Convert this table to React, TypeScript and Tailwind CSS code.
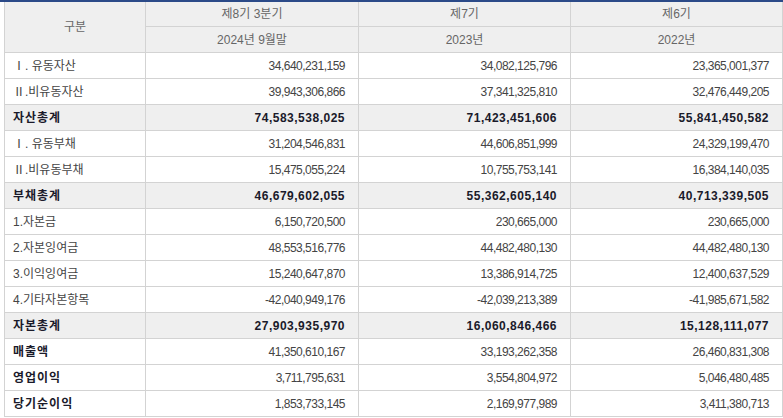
import React from 'react';

type Row = {
  label: string;
  values: [string, string, string];
  total?: boolean; // grey row, bold label + bold numbers
  strong?: boolean; // bold label only
};

const ROWS: Row[] = [
  { label: 'Ⅰ. 유동자산', values: ['34,640,231,159', '34,082,125,796', '23,365,001,377'] },
  { label: 'Ⅱ.비유동자산', values: ['39,943,306,866', '37,341,325,810', '32,476,449,205'] },
  { label: '자산총계', values: ['74,583,538,025', '71,423,451,606', '55,841,450,582'], total: true },
  { label: 'Ⅰ. 유동부채', values: ['31,204,546,831', '44,606,851,999', '24,329,199,470'] },
  { label: 'Ⅱ.비유동부채', values: ['15,475,055,224', '10,755,753,141', '16,384,140,035'] },
  { label: '부채총계', values: ['46,679,602,055', '55,362,605,140', '40,713,339,505'], total: true },
  { label: '1.자본금', values: ['6,150,720,500', '230,665,000', '230,665,000'] },
  { label: '2.자본잉여금', values: ['48,553,516,776', '44,482,480,130', '44,482,480,130'] },
  { label: '3.이익잉여금', values: ['15,240,647,870', '13,386,914,725', '12,400,637,529'] },
  { label: '4.기타자본항목', values: ['-42,040,949,176', '-42,039,213,389', '-41,985,671,582'] },
  { label: '자본총계', values: ['27,903,935,970', '16,060,846,466', '15,128,111,077'], total: true },
  { label: '매출액', values: ['41,350,610,167', '33,193,262,358', '26,460,831,308'], strong: true },
  { label: '영업이익', values: ['3,711,795,631', '3,554,804,972', '5,046,480,485'], strong: true },
  { label: '당기순이익', values: ['1,853,733,145', '2,169,977,989', '3,411,380,713'], strong: true },
];

const PERIODS = [
  { title: '제8기 3분기', date: '2024년 9월말' },
  { title: '제7기', date: '2023년' },
  { title: '제6기', date: '2022년' },
];

export default function App() {
  return (
    <div
      className="w-[783px] h-[418px] overflow-hidden bg-white"
      style={{ fontFamily: '"Liberation Sans", "Noto Sans CJK KR", sans-serif' }}
    >
      <div className="border-t-2 border-[#2b4a88] pl-[4px]">
        <div className="grid grid-cols-[141px_213px_212px_212px] border-l border-[#d3d3d3] text-[12px]">
          {/* Header */}
          <div className="row-span-2 flex items-center justify-center bg-[#efefef] border-r border-b border-[#d3d3d3] text-[#666]">
            구분
          </div>
          {PERIODS.map((p) => (
            <div
              key={p.title}
              className="h-[25px] flex items-center justify-center bg-[#efefef] border-r border-b border-[#d3d3d3] text-[#666]"
            >
              {p.title}
            </div>
          ))}
          {PERIODS.map((p) => (
            <div
              key={p.date}
              className="h-[26px] flex items-center justify-center bg-[#efefef] border-r border-b border-[#d3d3d3] text-[#666]"
            >
              {p.date}
            </div>
          ))}

          {/* Body */}
          {ROWS.map((row) => (
            <React.Fragment key={row.label}>
              <div
                className={`h-[26px] flex items-center pl-2 border-r border-b border-[#d3d3d3] ${
                  row.total ? 'bg-[#efefef]' : 'bg-white'
                } ${row.total || row.strong ? 'font-bold text-[#1a1a2a] tracking-[1px]' : 'text-[#444]'}`}
              >
                {row.label}
              </div>
              {row.values.map((v, i) => (
                <div
                  key={i}
                  className={`h-[26px] flex items-center justify-end pr-[13px] border-r border-b border-[#d3d3d3] ${
                    row.total
                      ? 'bg-[#efefef] font-bold text-[#1a1a2a] tracking-[0.5px]'
                      : 'bg-white text-[#444] tracking-[-0.5px]'
                  }`}
                >
                  {v}
                </div>
              ))}
            </React.Fragment>
          ))}
        </div>
      </div>
    </div>
  );
}
